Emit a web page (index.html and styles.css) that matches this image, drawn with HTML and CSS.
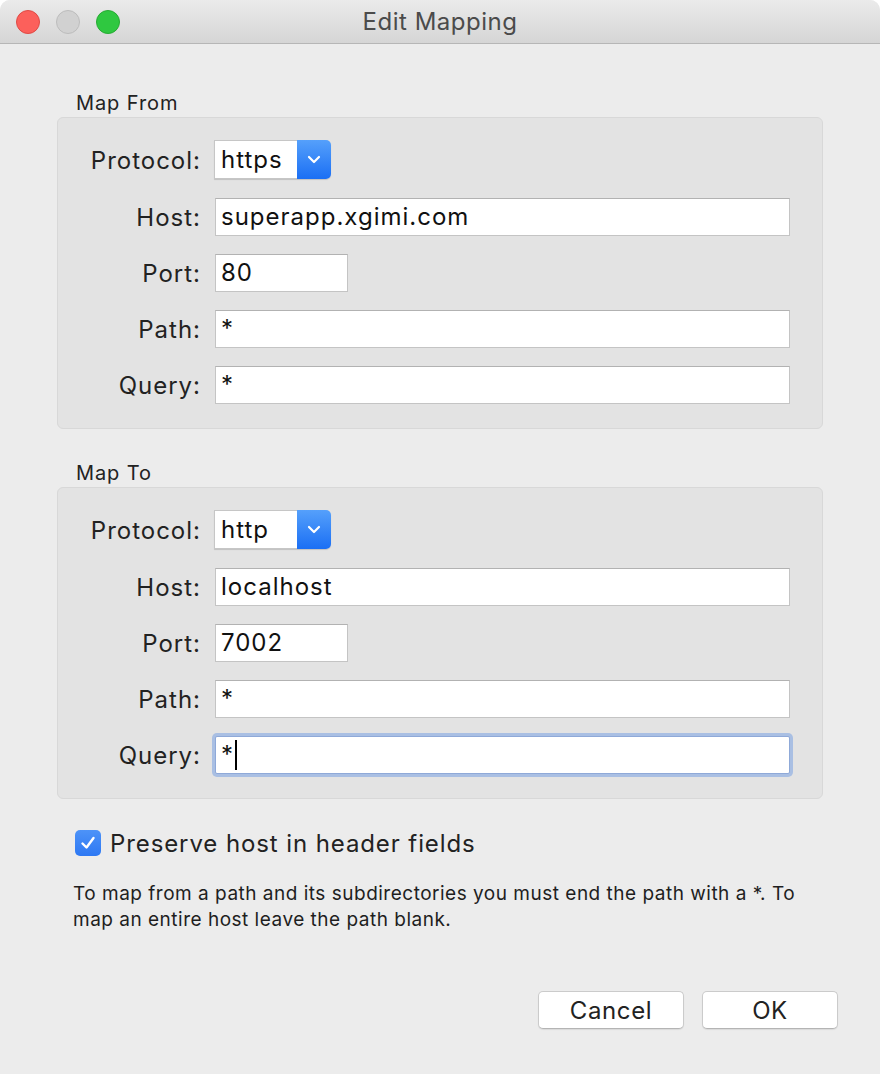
FILE: index.html
```html
<!DOCTYPE html>
<html>
<head>
<meta charset="utf-8">
<link rel="stylesheet" href="styles.css">
</head>
<body>
<div class="window">
  <div class="titlebar">
    <div class="lights">
      <span class="light red"></span>
      <span class="light gray"></span>
      <span class="light green"></span>
    </div>
    <div class="title">Edit Mapping</div>
  </div>
  <div class="content">
    <div class="section">
      <div class="legend">Map From</div>
      <div class="group">
        <div class="label">Protocol:</div>
        <div class="popup"><span class="popup-value">https</span><span class="popup-arrow"><svg width="14" height="9" viewBox="0 0 14 9"><path d="M2 2 L7 7 L12 2" fill="none" stroke="#fff" stroke-width="2.2" stroke-linecap="round" stroke-linejoin="round"/></svg></span></div>
        <div class="label">Host:</div>
        <div class="field">superapp.xgimi.com</div>
        <div class="label">Port:</div>
        <div class="field short">80</div>
        <div class="label">Path:</div>
        <div class="field">*</div>
        <div class="label">Query:</div>
        <div class="field">*</div>
      </div>
    </div>
    <div class="section second">
      <div class="legend">Map To</div>
      <div class="group">
        <div class="label">Protocol:</div>
        <div class="popup"><span class="popup-value">http</span><span class="popup-arrow"><svg width="14" height="9" viewBox="0 0 14 9"><path d="M2 2 L7 7 L12 2" fill="none" stroke="#fff" stroke-width="2.2" stroke-linecap="round" stroke-linejoin="round"/></svg></span></div>
        <div class="label">Host:</div>
        <div class="field">localhost</div>
        <div class="label">Port:</div>
        <div class="field short">7002</div>
        <div class="label">Path:</div>
        <div class="field">*</div>
        <div class="label">Query:</div>
        <div class="field focused">*<span class="caret"></span></div>
      </div>
    </div>
    <div class="check-row">
      <span class="checkbox"><svg width="18" height="16" viewBox="0 0 18 16"><path d="M3.5 8.5 L7.5 12.5 L14.5 3" fill="none" stroke="#fff" stroke-width="2.4" stroke-linecap="round" stroke-linejoin="round"/></svg></span>
      <span class="check-label">Preserve host in header fields</span>
    </div>
    <p class="help">To map from a path and its subdirectories you must end the path with a *. To map an entire host leave the path blank.</p>
    <div class="buttons">
      <button class="btn cancel">Cancel</button>
      <button class="btn ok">OK</button>
    </div>
  </div>
</div>
</body>
</html>
```
FILE: styles.css
```css
html, body {
  margin: 0;
  padding: 0;
  background: #ffffff;
}
body {
  width: 880px;
  height: 1074px;
  overflow: hidden;
  font-family: "Inter", "Noto Sans", sans-serif;
  color: #1e1e1e;
}
.window {
  width: 880px;
  height: 1074px;
  background: #ececec;
  border-radius: 10px 10px 0 0;
  overflow: hidden;
}
.titlebar {
  height: 43px;
  border-bottom: 1px solid #b6b6b6;
  background: linear-gradient(#ebebeb, #d5d5d5);
  display: flex;
  align-items: center;
  position: relative;
}
.lights {
  display: flex;
  gap: 16px;
  padding-left: 16px;
  position: absolute;
  left: 0;
  top: 10px;
}
.light {
  width: 24px;
  height: 24px;
  border-radius: 50%;
  box-sizing: border-box;
}
.red { background: #fc605b; border: 1px solid #df4a45; }
.gray { background: #d1d1d1; border: 1px solid #bcbcbc; }
.green { background: #2fc840; border: 1px solid #27aa33; }
.title {
  flex: 1;
  text-align: center;
  font-size: 24px;
  color: #4b4b4b;
  letter-spacing: 0.5px;
}
.content {
  padding: 47px 57px 0 57px;
}
.legend {
  font-size: 20px;
  line-height: 24px;
  height: 24px;
  margin-left: 19px;
  margin-bottom: 2px;
  color: #222;
  letter-spacing: 0.9px;
}
.section.second {
  margin-top: 32px;
}
.group {
  box-sizing: border-box;
  height: 312px;
  background: #e3e3e3;
  border: 1px solid #d8d8d8;
  border-radius: 6px;
  padding: 22px 32px 0 0;
  display: grid;
  grid-template-columns: 142px 1fr;
  grid-template-rows: 40px repeat(4, 38px);
  column-gap: 15px;
  row-gap: 18px;
  align-items: center;
}
.label {
  text-align: right;
  font-size: 24px;
  letter-spacing: 1px;
  margin-right: -1px;
  color: #222;
}
.field {
  box-sizing: border-box;
  height: 38px;
  background: #fff;
  border: 1px solid #c4c4c4;
  border-top-color: #b2b2b2;
  font-size: 24px;
  letter-spacing: 1px;
  line-height: 36px;
  padding-left: 5px;
  color: #111;
  display: flex;
  align-items: center;
}
.field.short {
  width: 133px;
}
.field.focused {
  box-shadow: 0 0 0 3px #a9bfe3;
  border-color: #8fa9d8;
  border-radius: 2px;
}
.caret {
  display: inline-block;
  width: 2px;
  height: 30px;
  background: #000;
  margin-left: 1px;
}
.popup {
  align-self: start;
  margin-left: -1px;
  width: 117px;
  height: 39px;
  display: flex;
  box-sizing: border-box;
  border-radius: 0 5px 5px 0;
  box-shadow: 0 1px 1px rgba(0,0,0,0.15);
}
.popup-value {
  flex: 1;
  background: #fff;
  border: 1px solid #c6c6c6;
  border-right: none;
  font-size: 24px;
  letter-spacing: 1px;
  line-height: 37px;
  padding-left: 6px;
  color: #111;
}
.popup-arrow {
  width: 34px;
  background: linear-gradient(#55a0fb, #1b6ff4);
  border-radius: 0 5px 5px 0;
  display: flex;
  align-items: center;
  justify-content: center;
}
.check-row {
  margin-top: 31px;
  margin-left: 18px;
  display: flex;
  align-items: center;
  gap: 9px;
  height: 26px;
}
.checkbox {
  width: 26px;
  height: 26px;
  border-radius: 5px;
  background: linear-gradient(#4d93f8, #2d78f3);
  display: flex;
  align-items: center;
  justify-content: center;
}
.check-label {
  font-size: 24px;
  letter-spacing: 0.9px;
  color: #222;
}
.help {
  margin: 25px 20px 0 16px;
  font-size: 19px;
  letter-spacing: 0.5px;
  line-height: 26px;
  color: #1e1e1e;
}
.buttons {
  margin-top: 58px;
  display: flex;
  justify-content: flex-end;
  gap: 18px;
  margin-right: -15px;
}
.btn {
  height: 38px;
  background: #fff;
  border: 1px solid #cbcbcb;
  border-bottom-color: #b4b4b4;
  border-radius: 5px;
  font-family: "Inter", "Noto Sans", sans-serif;
  font-size: 24px;
  letter-spacing: 0.6px;
  color: #222;
  box-shadow: 0 1px 1px rgba(0,0,0,0.08);
}
.btn.cancel { width: 146px; }
.btn.ok { width: 136px; }
```
